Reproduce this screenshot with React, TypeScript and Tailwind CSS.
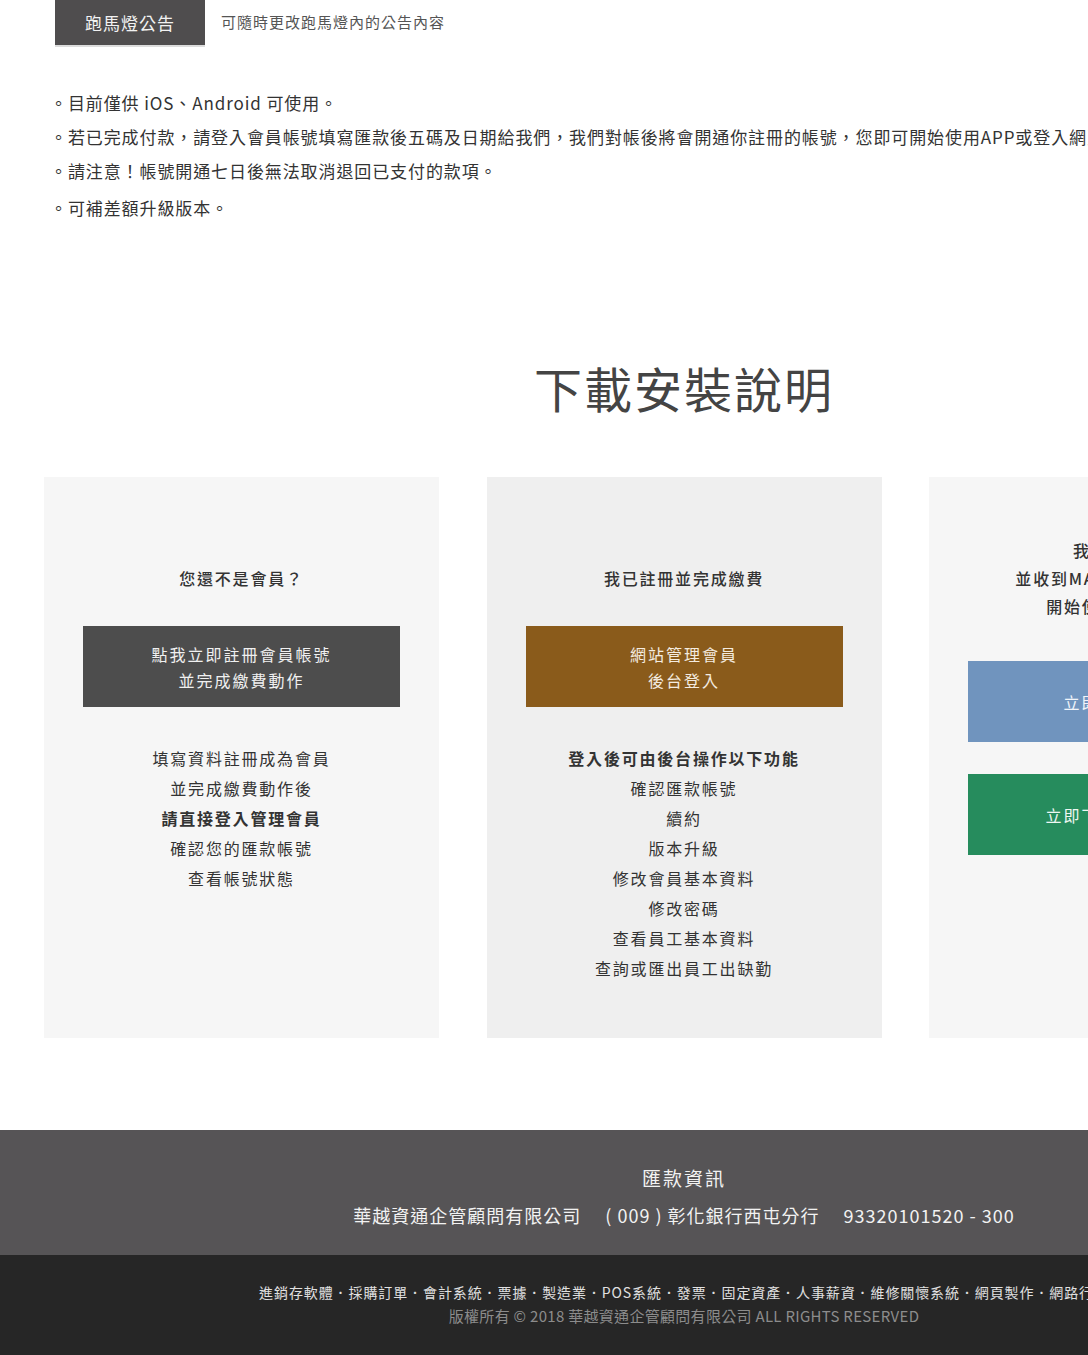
import React from 'react';

const notices = [
  '。目前僅供 iOS、Android 可使用。',
  '。若已完成付款，請登入會員帳號填寫匯款後五碼及日期給我們，我們對帳後將會開通你註冊的帳號，您即可開始使用APP或登入網頁版後台管理。',
  '。請注意！帳號開通七日後無法取消退回已支付的款項。',
];

const footerLinks = ['進銷存軟體', '採購訂單', '會計系統', '票據', '製造業', 'POS系統', '發票', '固定資產', '人事薪資', '維修關懷系統', '網頁製作', '網路行銷'];

function Card({
  bg,
  pt,
  heading,
  children,
}: {
  bg: string;
  pt: string;
  heading: React.ReactNode;
  children: React.ReactNode;
}) {
  return (
    <div className={`w-[395px] h-[561px] px-[39px] ${bg} ${pt}`}>
      <div className="text-center text-[16px] leading-[28px] tracking-[1.8px] font-medium text-[#333]">{heading}</div>
      {children}
    </div>
  );
}

export default function App() {
  return (
    <div className="w-[1088px] overflow-hidden bg-white font-['Noto_Sans_CJK_TC','Noto_Sans',sans-serif]">
      <div className="w-[1368px]">
        {/* marquee */}
        <div className="flex items-center pl-[55px] h-[47px]">
          <div className="w-[150px] h-[47px] bg-[#4f4d4e] border-b-2 border-[#dcdcdc] flex items-center justify-center text-[17px] tracking-[1px] text-[#f2f2f2]">
            跑馬燈公告
          </div>
          <div className="ml-[16px] text-[15px] text-[#555] tracking-[1px] pb-[2px]">可隨時更改跑馬燈內的公告內容</div>
        </div>

        {/* notices */}
        <div className="pl-[50px] mt-[39px] text-[17px] tracking-[0.9px] text-[#333]">
          {notices.map((n) => (
            <p key={n} className="leading-[34px] whitespace-nowrap">
              {n}
            </p>
          ))}
          <p className="leading-[34px] mt-[3px]">。可補差額升級版本。</p>
        </div>

        <h2 className="mt-[130px] text-center text-[48px] leading-[64px] tracking-[2px] text-[#444] font-normal">下載安裝說明</h2>

        {/* cards */}
        <div className="mt-[58px] mx-[44px] flex justify-between">
          <Card bg="bg-[#f6f6f6]" pt="pt-[87px]" heading="您還不是會員？">
            <div className="mt-[34px] h-[81px] bg-[#4d4d4d] flex flex-col items-center justify-center text-[16px] leading-[26px] tracking-[2px] text-[#f0f0f0]">
              <span>點我立即註冊會員帳號</span>
              <span>並完成繳費動作</span>
            </div>
            <div className="mt-[36px] text-center text-[16px] leading-[30px] tracking-[1.8px] text-[#333]">
              <p>填寫資料註冊成為會員</p>
              <p>並完成繳費動作後</p>
              <p className="font-semibold">請直接登入管理會員</p>
              <p>確認您的匯款帳號</p>
              <p>查看帳號狀態</p>
            </div>
          </Card>

          <Card bg="bg-[#efefef]" pt="pt-[87px]" heading="我已註冊並完成繳費">
            <div className="mt-[34px] h-[81px] bg-[#8a5b1b] flex flex-col items-center justify-center text-[16px] leading-[26px] tracking-[2px] text-[#f4ece0]">
              <span>網站管理會員</span>
              <span>後台登入</span>
            </div>
            <div className="mt-[36px] text-center text-[16px] leading-[30px] tracking-[1.8px] text-[#333]">
              <p className="font-semibold">登入後可由後台操作以下功能</p>
              <p>確認匯款帳號</p>
              <p>續約</p>
              <p>版本升級</p>
              <p>修改會員基本資料</p>
              <p>修改密碼</p>
              <p>查看員工基本資料</p>
              <p>查詢或匯出員工出缺勤</p>
            </div>
          </Card>

          <Card
            bg="bg-[#f6f6f6]"
            pt="pt-[59px]"
            heading={
              <>
                <p>我已開通帳號</p>
                <p>並收到MAIL開通帳號通知信</p>
                <p>開始使用手機版APP</p>
              </>
            }
          >
            <div className="mt-[41px] h-[81px] bg-[#7094be] flex items-center justify-center text-[16px] tracking-[2px] text-[#f0f4fa]">
              立即登入網頁版
            </div>
            <div className="mt-[32px] h-[81px] bg-[#268c5d] flex items-center justify-center text-[16px] tracking-[2px] text-[#eef7f2]">
              立即下載手機版APP
            </div>
          </Card>
        </div>

        {/* footer */}
        <footer className="mt-[92px]">
          <div className="h-[125px] bg-[#565456] flex flex-col items-center text-[#f2f2f2]">
            <p className="mt-[34px] text-[19px] leading-[28px] tracking-[2px]">匯款資訊</p>
            <p className="mt-[9px] text-[18px] leading-[28px] tracking-[1px] flex gap-[24px]">
              <span>華越資通企管顧問有限公司</span>
              <span>( 009 ) 彰化銀行西屯分行</span>
              <span>93320101520 - 300</span>
            </p>
          </div>
          <div className="h-[100px] bg-[#262626] flex flex-col items-center">
            <p className="mt-[25px] text-[14px] leading-[24px] tracking-[0.9px] text-[#e0e0e0] whitespace-nowrap">{footerLinks.join('．')}</p>
            <p className="text-[15px] leading-[24px] tracking-[0.3px] text-[#8c8c8c]">版權所有 © 2018 華越資通企管顧問有限公司 ALL RIGHTS RESERVED</p>
          </div>
        </footer>
      </div>
    </div>
  );
}
